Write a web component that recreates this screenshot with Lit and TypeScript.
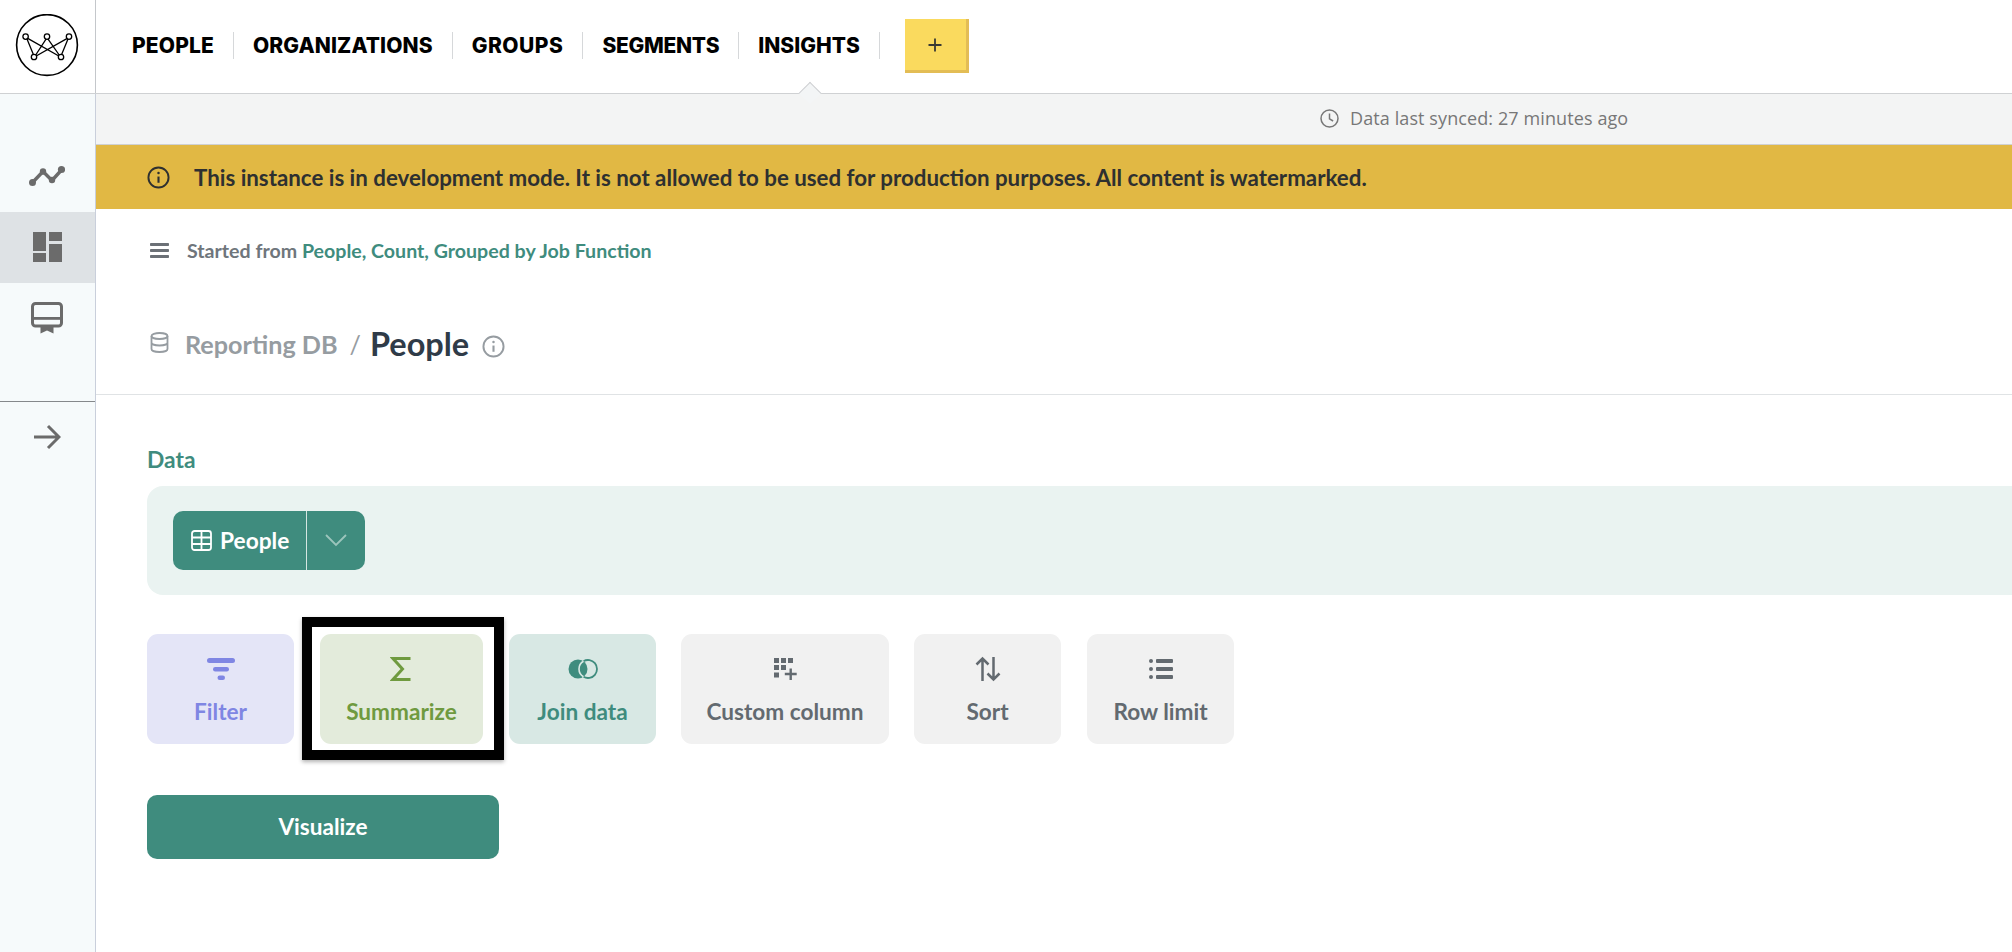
import { LitElement, html, css, svg } from "lit";
import { customElement } from "lit/decorators.js";

const logo = svg`<svg width="64" height="64" viewBox="0 0 64 64" fill="none" stroke="#000">
  <circle cx="32" cy="31" r="30.4" stroke-width="1.6"/>
  <g stroke-width="1.3">
    <path d="M11.4 23.6 19.4 43M11.4 23.6 45.6 43M32 23.6 19.4 43M32 23.6 45.6 43M53.6 23.6 45.6 43M53.6 23.6 19.4 43"/>
    <circle cx="10.6" cy="22.6" r="2.7" fill="#fff"/><circle cx="32" cy="22.6" r="2.7" fill="#fff"/><circle cx="54" cy="22.6" r="2.7" fill="#fff"/>
    <circle cx="19" cy="43" r="2.7" fill="#fff"/><circle cx="46" cy="43" r="2.7" fill="#fff"/>
  </g></svg>`;

const info = (s: number, c: string, sw = 2) => svg`<svg width=${s} height=${s} viewBox="0 0 24 24" fill="none" stroke=${c} stroke-width=${sw}>
  <circle cx="12" cy="12" r="10.5"/><path d="M12 11v6.5" stroke-width="2.2"/><circle cx="12" cy="7.4" r="1.3" fill=${c} stroke="none"/></svg>`;

const NAV: [string, number][] = [["PEOPLE", 0.15], ["ORGANIZATIONS", 0.1], ["GROUPS", 0.5], ["SEGMENTS", -0.3], ["INSIGHTS", 0]];

@customElement("app-root")
export class AppRoot extends LitElement {
  static styles = css`
    :host { display: block; width: 100%; height: 952px; overflow: hidden; background: #fff; font-family: Lato, "Liberation Sans", sans-serif; position: relative; }
    * { box-sizing: border-box; }
    svg { display: block; flex: none; }
    .top { display: flex; height: 94px; border-bottom: 1px solid #cfd1d3; }
    .logo { width: 96px; border-right: 1px solid #c4c7cb; display: flex; justify-content: center; align-items: flex-start; padding-top: 14px; padding-right: 1px; }
    .nav { display: flex; align-items: flex-start; padding: 0 0 0 17px; position: relative; }
    .nav span { margin-top: 32px; height: 27px; padding: 0 19px; border-right: 1px solid #d6d8da; font: 800 21px/27px Inter, sans-serif; color: #000; white-space: nowrap; }
    .add { margin: 19px 0 0 25px; width: 64px; height: 54px; background: #fada5e; border-right: 3px solid #e3bd55; border-bottom: 3px solid #e3bd55; display: flex; align-items: center; justify-content: center; }
    .caret { position: absolute; left: 802px; top: 85px; width: 16px; height: 16px; background: #f3f5f6; border-top: 1px solid #cfd1d3; border-left: 1px solid #cfd1d3; transform: rotate(45deg); }
    .body { display: flex; height: 858px; }
    .side { width: 96px; flex: none; background: #f6fafb; border-right: 1px solid #c9cfdb; padding-top: 47px; }
    .si { height: 71px; display: flex; align-items: center; justify-content: center; padding: 0 1px 2px 0; }
    .si.on { background: #dee2e5; }
    .sdiv { height: 1px; background: #85888b; margin-top: 47px; }
    .main { flex: 1; min-width: 0; }
    .sync { height: 51px; background: #f3f4f4; border-bottom: 1px solid #cfd1d3; display: flex; align-items: center; padding: 0 0 2px 1224px; gap: 11px; font: 400 18px "Open Sans", sans-serif; letter-spacing: 0.1px; color: #777; }
    .banner { height: 64px; background: #e1b844; display: flex; align-items: center; padding-left: 51px; gap: 24px; font-weight: 700; font-size: 22.3px; color: #2e3030; }
    .crumb { height: 82px; display: flex; align-items: center; padding-left: 54px; gap: 18px; font-weight: 700; font-size: 19.6px; color: #6f767c; }
    .crumb b { color: #3f8c7e; font-weight: 700; }
    .title { height: 104px; border-bottom: 1px solid #e0e3e5; display: flex; align-items: flex-start; padding: 37px 0 0 54px; color: #969ca1; font-weight: 700; font-size: 25.2px; line-height: 32px; }
    .title .db { margin: 4px 16px 0 0; }
    .title .sl { margin: 0 9px 0 12px; font-weight: 400; }
    .title .nm { font-size: 32.5px; font-weight: 700; color: #2f3b48; margin-right: 13px; }
    .title .ic { margin-top: 7px; }
    .work { padding: 52px 0 0 51px; }
    .lbl { font-weight: 700; font-size: 22.8px; line-height: 24px; color: #3f8c7e; }
    .panel { margin-top: 15px; height: 109px; background: #eaf3f1; border-radius: 16px 0 0 16px; padding: 25px 26px; }
    .pick { display: inline-flex; height: 59px; width: 192px; background: #3f8c7e; border-radius: 10px; color: #fff; font-weight: 700; font-size: 22.7px; }
    .pick .a { width: 134px; border-right: 1px solid #d5e6e2; display: flex; align-items: center; gap: 8px; padding-left: 18px; }
    .pick .b { flex: 1; display: flex; align-items: center; justify-content: center; }
    .acts { display: flex; margin-top: 39px; gap: 26px; }
    .act { height: 110px; border-radius: 11px; flex: none; display: flex; flex-direction: column; align-items: center; font-weight: 700; font-size: 22.6px; padding-top: 21px; position: relative; }
    .act .ico { height: 28px; display: flex; align-items: center; justify-content: center; }
    .act .t { margin-top: 16px; line-height: 26px; white-space: nowrap; }
    .f { width: 147px; background: #e4e5f7; color: #7f86e3; }
    .s { width: 163px; background: #e3ebdb; color: #6f9a3f; }
    .j { width: 147px; background: #d8e8e4; color: #3f8c7e; margin-right: -1px; }
    .g { background: #f1f1f1; color: #636a70; }
    .cc { width: 208px; margin-right: -1px; }
    .so, .rl { width: 147px; }
    .mark { position: absolute; left: -18px; top: -17px; width: 202px; height: 143px; border: 10px solid #000; box-shadow: 0 2px 4px rgba(0,0,0,.3); }
    .viz { margin-top: 51px; width: 352px; height: 64px; background: #3f8c7e; border-radius: 10px; color: #fff; font-weight: 700; font-size: 22.6px; display: flex; align-items: center; justify-content: center; padding-bottom: 1px; }
  `;

  render() {
    return html`
      <div class="top">
        <div class="logo">${logo}</div>
        <div class="nav">
          ${NAV.map(([n, ls]) => html`<span style="letter-spacing:${ls}px">${n}</span>`)}
          <div class="add"><svg width="16" height="16" viewBox="0 0 16 16" stroke="#3a3a33" stroke-width="1.8"><path d="M8 1.5v13M1.5 8h13"/></svg></div>
        </div>
      </div>
      <div class="caret"></div>
      <div class="body">
        <div class="side">
          <div class="si"><svg width="36" height="22" viewBox="0 0 36 22" fill="#6b6b6b" stroke="none">
            <path d="M3.500 17.500 14 6.500l9 9L32.500 5" fill="none" stroke="#6b6b6b" stroke-width="3.4"/>
            <circle cx="3.500" cy="17.500" r="3.500"/><circle cx="14" cy="6.500" r="3.200"/><circle cx="23" cy="15" r="3.200"/><circle cx="32.500" cy="4.500" r="3.600"/></svg></div>
          <div class="si on"><svg width="29" height="30" viewBox="0 0 29 30" fill="#6b6b6b">
            <rect x="0" y="0" width="13" height="19"/><rect x="16" y="0" width="13" height="9"/><rect x="0" y="21" width="13" height="9"/><rect x="16" y="12" width="13" height="18"/></svg></div>
          <div class="si"><svg width="32" height="32" viewBox="0 0 32 32" fill="none">
            <rect x="1.500" y="1.500" width="29" height="22.500" rx="3" stroke="#6b6b6b" stroke-width="3"/>
            <rect x="2" y="15" width="28" height="2.800" fill="#6b6b6b"/>
            <path d="M9.500 24h13v7.500l-6.500-3-6.500 3z" fill="#6b6b6b"/></svg></div>
          <div class="sdiv"></div>
          <div class="si"><svg width="28" height="26" viewBox="0 0 28 26" fill="none" stroke="#6b6b6b" stroke-width="3"><path d="M1 13h25M15 2l11 11-11 11"/></svg></div>
        </div>
        <div class="main">
          <div class="sync">
            <svg width="19" height="19" viewBox="0 0 19 19" fill="none" stroke="#777" stroke-width="1.500"><circle cx="9.500" cy="9.500" r="8.500"/><path d="M9.500 4.500v5.300l3.600 2.200"/></svg>
            <span>Data last synced: 27 minutes ago</span>
          </div>
          <div class="banner">${info(23, "#2e3030")}<span>This instance is in development mode. It is not allowed to be used for production purposes. All content is watermarked.</span></div>
          <div class="crumb">
            <svg width="19" height="15" viewBox="0 0 19 15" fill="#6b7076"><rect width="19" height="3" rx=".8"/><rect y="6" width="19" height="3" rx=".8"/><rect y="12" width="19" height="3" rx=".8"/></svg>
            <span>Started from <b>People, Count, Grouped by Job Function</b></span>
          </div>
          <div class="title">
            <svg class="db" width="19" height="21" viewBox="0 0 19 21" fill="none" stroke="#969ca1" stroke-width="1.800"><ellipse cx="9.500" cy="4" rx="8" ry="3"/><path d="M1.500 4v13c0 1.700 3.600 3 8 3s8-1.300 8-3V4M1.500 10.500c0 1.700 3.600 3 8 3s8-1.300 8-3"/></svg>
            <span>Reporting DB</span><span class="sl">/</span><span class="nm">People</span>
            <span class="ic">${info(23, "#969ca1")}</span>
          </div>
          <div class="work">
            <div class="lbl">Data</div>
            <div class="panel">
              <div class="pick">
                <div class="a"><svg width="21" height="21" viewBox="0 0 21 21" fill="none" stroke="#fff" stroke-width="1.800"><rect x="1" y="1" width="19" height="19" rx="2.500"/><path d="M1 7.500h19M1 14h19M10.500 1v19"/></svg><span>People</span></div>
                <div class="b"><svg width="22" height="13" viewBox="0 0 22 13" fill="none" stroke="#9cc5bc" stroke-width="1.800"><path d="M1 1l10 10L21 1"/></svg></div>
              </div>
            </div>
            <div class="acts">
              <div class="act f"><div class="ico"><svg width="28" height="24" viewBox="0 0 28 24" fill="#7f86e3"><rect y="1" width="28" height="5" rx="2.500"/><rect x="6" y="10" width="16" height="4.500" rx="2.200"/><rect x="10.500" y="18.500" width="7.500" height="4.500" rx="2.200"/></svg></div><div class="t">Filter</div></div>
              <div class="act s"><div class="mark"></div><div class="ico"><svg width="21" height="24" viewBox="0 0 21 24" fill="none" stroke="#6f9a3f" stroke-width="3" style="transform:translateX(-1px)"><path d="M20.500 1.500H3l9.500 10.500L3 22.500h17.500"/></svg></div><div class="t">Summarize</div></div>
              <div class="act j"><div class="ico"><svg width="30" height="20" viewBox="0 0 30 20" fill="none"><circle cx="10" cy="10" r="9.500" fill="#3f8c7e"/><path d="M15.460 2.230A9 9 0 1 1 15.460 17.770" stroke="#3f8c7e" stroke-width="1.800"/><path d="M15.460 2.230A9 9 0 0 0 15.460 17.770" stroke="#d8e8e4" stroke-width="1.600"/></svg></div><div class="t">Join data</div></div>
              <div class="act g cc"><div class="ico"><svg width="23" height="24" viewBox="0 0 23 24" fill="#636a70"><rect y="1" width="5" height="5"/><rect x="7" y="1" width="5" height="5"/><rect x="14" y="1" width="5" height="5"/><rect y="8" width="5" height="5"/><rect x="7" y="8" width="5" height="5"/><rect y="15.500" width="5" height="5"/><path d="M15.500 11.500h2.400v4.300h4.800v2.400h-4.800v4.800h-2.400v-4.800H10.800v-2.400h4.700z"/></svg></div><div class="t">Custom column</div></div>
              <div class="act g so"><div class="ico"><svg width="26" height="26" viewBox="0 0 26 26" fill="none" stroke="#636a70" stroke-width="2.500"><path d="M7.500 25V3M1.500 8.500 7.500 2.500l6 6M18.500 1v22M12.500 17.500l6 6 6-6"/></svg></div><div class="t">Sort</div></div>
              <div class="act g rl"><div class="ico"><svg width="24" height="22" viewBox="0 0 24 22" fill="#636a70"><circle cx="2" cy="3" r="2"/><circle cx="2" cy="11" r="2"/><circle cx="2" cy="19" r="2"/><rect x="7" y="1" width="17" height="4" rx="1"/><rect x="7" y="9" width="17" height="4" rx="1"/><rect x="7" y="17" width="17" height="4" rx="1"/></svg></div><div class="t">Row limit</div></div>
            </div>
            <div class="viz">Visualize</div>
          </div>
        </div>
      </div>
    `;
  }
}
